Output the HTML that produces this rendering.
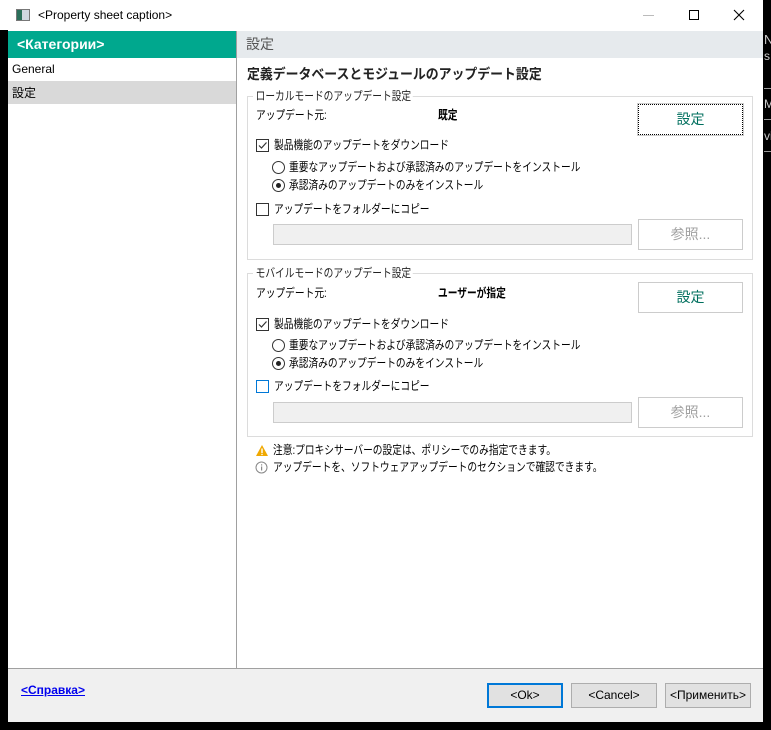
<!DOCTYPE html>
<html><head><meta charset="utf-8"><style>
*{margin:0;padding:0;box-sizing:border-box}
body{width:771px;height:730px;background:#000;position:relative;overflow:hidden;font-family:"Liberation Sans","Noto Sans CJK JP",sans-serif;font-size:12px;color:#000}
.a{position:absolute}
.win{left:0;top:0;width:763px;height:722px;background:#fff}
.t{white-space:nowrap;line-height:16px}
.j{transform:scaleX(0.81);transform-origin:0 0}
.gb{border:1px solid #dcdcdc}
.leg{background:#fff;padding:0 2px;color:#222}
.btn{border:1px solid #cccccc;background:#fff;text-align:center}
.cb{width:13px;height:13px;border:1px solid #333;background:#fff}
.rb{width:13px;height:13px;border:1px solid #333;border-radius:50%;background:#fff}
.rb.on::after{content:"";position:absolute;left:3px;top:3px;width:5px;height:5px;border-radius:50%;background:#222}
.fld{background:#f0f0f0;border:1px solid #cccccc}
.fb{border:1px solid #adadad;background:#e1e1e1;text-align:center;line-height:23px}
</style></head><body>
<div class="a win"></div>
<div class="a" style="left:16px;top:9px;width:14px;height:12px;border:1px solid #777;background:linear-gradient(90deg,#2a6f5a 0 5px,#cfd8e0 5px)"></div>
<div class="a t" style="left:38px;top:7px;font-size:12px">&lt;Property sheet caption&gt;</div>
<div class="a" style="left:643px;top:15px;width:11px;height:1px;background:#bbb"></div>
<div class="a" style="left:689px;top:10px;width:10px;height:10px;border:1px solid #000"></div>
<svg class="a" style="left:733px;top:9px" width="12" height="12"><path d="M1 1L11 11M11 1L1 11" stroke="#000" stroke-width="1.1"/></svg>
<div class="a" style="left:0;top:30px;width:8px;height:692px;background:#000"></div>
<div class="a" style="left:8px;top:31px;width:228px;height:27px;background:#00a88e"></div>
<div class="a t" style="left:17px;top:36px;color:#fff;font-weight:bold;font-size:14px">&lt;Категории&gt;</div>
<div class="a t" style="left:12px;top:61px">General</div>
<div class="a" style="left:8px;top:81px;width:228px;height:23px;background:#d9d9d9"></div>
<div class="a t" style="left:12px;top:85px">設定</div>
<div class="a" style="left:236px;top:31px;width:1px;height:637px;background:#a0a0a0"></div>
<div class="a" style="left:237px;top:31px;width:526px;height:27px;background:#e6eaed"></div>
<div class="a t" style="left:246px;top:36px;font-size:14px;color:#555">設定</div>
<div class="a t" style="left:247px;top:66px;font-size:14px;font-weight:bold;color:#222;transform:scaleX(0.92);transform-origin:0 0">定義データベースとモジュールのアップデート設定</div>
<!-- group 1 -->
<div class="a gb" style="left:247px;top:96px;width:506px;height:164px"></div>
<div class="a" style="left:253px;top:92px;width:156px;height:8px;background:#fff"></div>
<div class="a t leg j" style="left:254px;top:88px">ローカルモードのアップデート設定</div>
<div class="a t j" style="left:256px;top:107px">アップデート元:</div>
<div class="a t j" style="left:438px;top:107px;font-weight:bold">既定</div>
<div class="a btn" style="left:638px;top:104px;width:105px;height:31px;border:1px dotted #000;outline:1px solid #ccc;line-height:29px;color:#006f5e;font-size:14px">設定</div>
<div class="a cb" style="left:256px;top:139px"></div>
<svg class="a" style="left:257px;top:140px" width="11" height="11"><path d="M2 5.5L4.5 8L9.5 2.5" stroke="#333" fill="none" stroke-width="1.2"/></svg>
<div class="a t j" style="left:274px;top:137px">製品機能のアップデートをダウンロード</div>
<div class="a rb" style="left:272px;top:161px"></div>
<div class="a t j" style="left:289px;top:159px">重要なアップデートおよび承認済みのアップデートをインストール</div>
<div class="a rb on" style="left:272px;top:179px"></div>
<div class="a t j" style="left:289px;top:177px">承認済みのアップデートのみをインストール</div>
<div class="a cb" style="left:256px;top:203px"></div>
<div class="a t j" style="left:274px;top:201px">アップデートをフォルダーにコピー</div>
<div class="a fld" style="left:273px;top:224px;width:359px;height:21px"></div>
<div class="a btn" style="left:638px;top:219px;width:105px;height:31px;line-height:29px;color:#a0a0a0;font-size:14px">参照...</div>
<!-- group 2 -->
<div class="a gb" style="left:247px;top:273px;width:506px;height:164px"></div>
<div class="a" style="left:253px;top:269px;width:156px;height:8px;background:#fff"></div>
<div class="a t leg j" style="left:254px;top:265px">モバイルモードのアップデート設定</div>
<div class="a t j" style="left:256px;top:285px">アップデート元:</div>
<div class="a t j" style="left:438px;top:285px;font-weight:bold">ユーザーが指定</div>
<div class="a btn" style="left:638px;top:282px;width:105px;height:31px;line-height:29px;color:#006f5e;font-size:14px">設定</div>
<div class="a cb" style="left:256px;top:318px"></div>
<svg class="a" style="left:257px;top:319px" width="11" height="11"><path d="M2 5.5L4.5 8L9.5 2.5" stroke="#333" fill="none" stroke-width="1.2"/></svg>
<div class="a t j" style="left:274px;top:316px">製品機能のアップデートをダウンロード</div>
<div class="a rb" style="left:272px;top:339px"></div>
<div class="a t j" style="left:289px;top:337px">重要なアップデートおよび承認済みのアップデートをインストール</div>
<div class="a rb on" style="left:272px;top:357px"></div>
<div class="a t j" style="left:289px;top:355px">承認済みのアップデートのみをインストール</div>
<div class="a cb" style="left:256px;top:380px;border-color:#0078d7"></div>
<div class="a t j" style="left:274px;top:378px">アップデートをフォルダーにコピー</div>
<div class="a fld" style="left:273px;top:402px;width:359px;height:21px"></div>
<div class="a btn" style="left:638px;top:397px;width:105px;height:31px;line-height:29px;color:#a0a0a0;font-size:14px">参照...</div>
<!-- notes -->
<svg class="a" style="left:255px;top:444px" width="14" height="13"><path d="M7 1L13 12H1Z" fill="#f0a800"/><rect x="6.3" y="4.5" width="1.4" height="4.5" fill="#fff"/><rect x="6.3" y="9.8" width="1.4" height="1.3" fill="#fff"/></svg>
<div class="a t j" style="left:273px;top:442px">注意:プロキシサーバーの設定は、ポリシーでのみ指定できます。</div>
<svg class="a" style="left:255px;top:461px" width="13" height="13"><circle cx="6.5" cy="6.5" r="5.5" stroke="#888" fill="none"/><rect x="6" y="5.5" width="1.2" height="4" fill="#888"/><rect x="6" y="3.3" width="1.2" height="1.2" fill="#888"/></svg>
<div class="a t j" style="left:273px;top:459px">アップデートを、ソフトウェアアップデートのセクションで確認できます。</div>
<!-- footer -->
<div class="a" style="left:8px;top:668px;width:755px;height:54px;background:#f0f0f0;border-top:1px solid #a0a0a0"></div>
<div class="a t" style="left:21px;top:682px;color:#0000ee;text-decoration:underline;font-weight:bold">&lt;Справка&gt;</div>
<div class="a fb" style="left:487px;top:683px;width:76px;height:25px;border:2px solid #0078d7;line-height:21px">&lt;Ok&gt;</div>
<div class="a fb" style="left:571px;top:683px;width:86px;height:25px">&lt;Cancel&gt;</div>
<div class="a fb" style="left:665px;top:683px;width:86px;height:25px">&lt;Применить&gt;</div>
<div class="a t" style="left:764px;top:32px;color:#ccc;font-size:13px">N</div>
<div class="a t" style="left:764px;top:48px;color:#ccc;font-size:12px">s</div>
<div class="a" style="left:764px;top:88px;width:7px;height:1px;background:#999"></div>
<div class="a t" style="left:764px;top:96px;color:#ccc">Ma</div>
<div class="a" style="left:764px;top:119px;width:7px;height:1px;background:#999"></div>
<div class="a t" style="left:764px;top:128px;color:#ccc">vi</div>
<div class="a" style="left:764px;top:151px;width:7px;height:1px;background:#999"></div>
</body></html>
